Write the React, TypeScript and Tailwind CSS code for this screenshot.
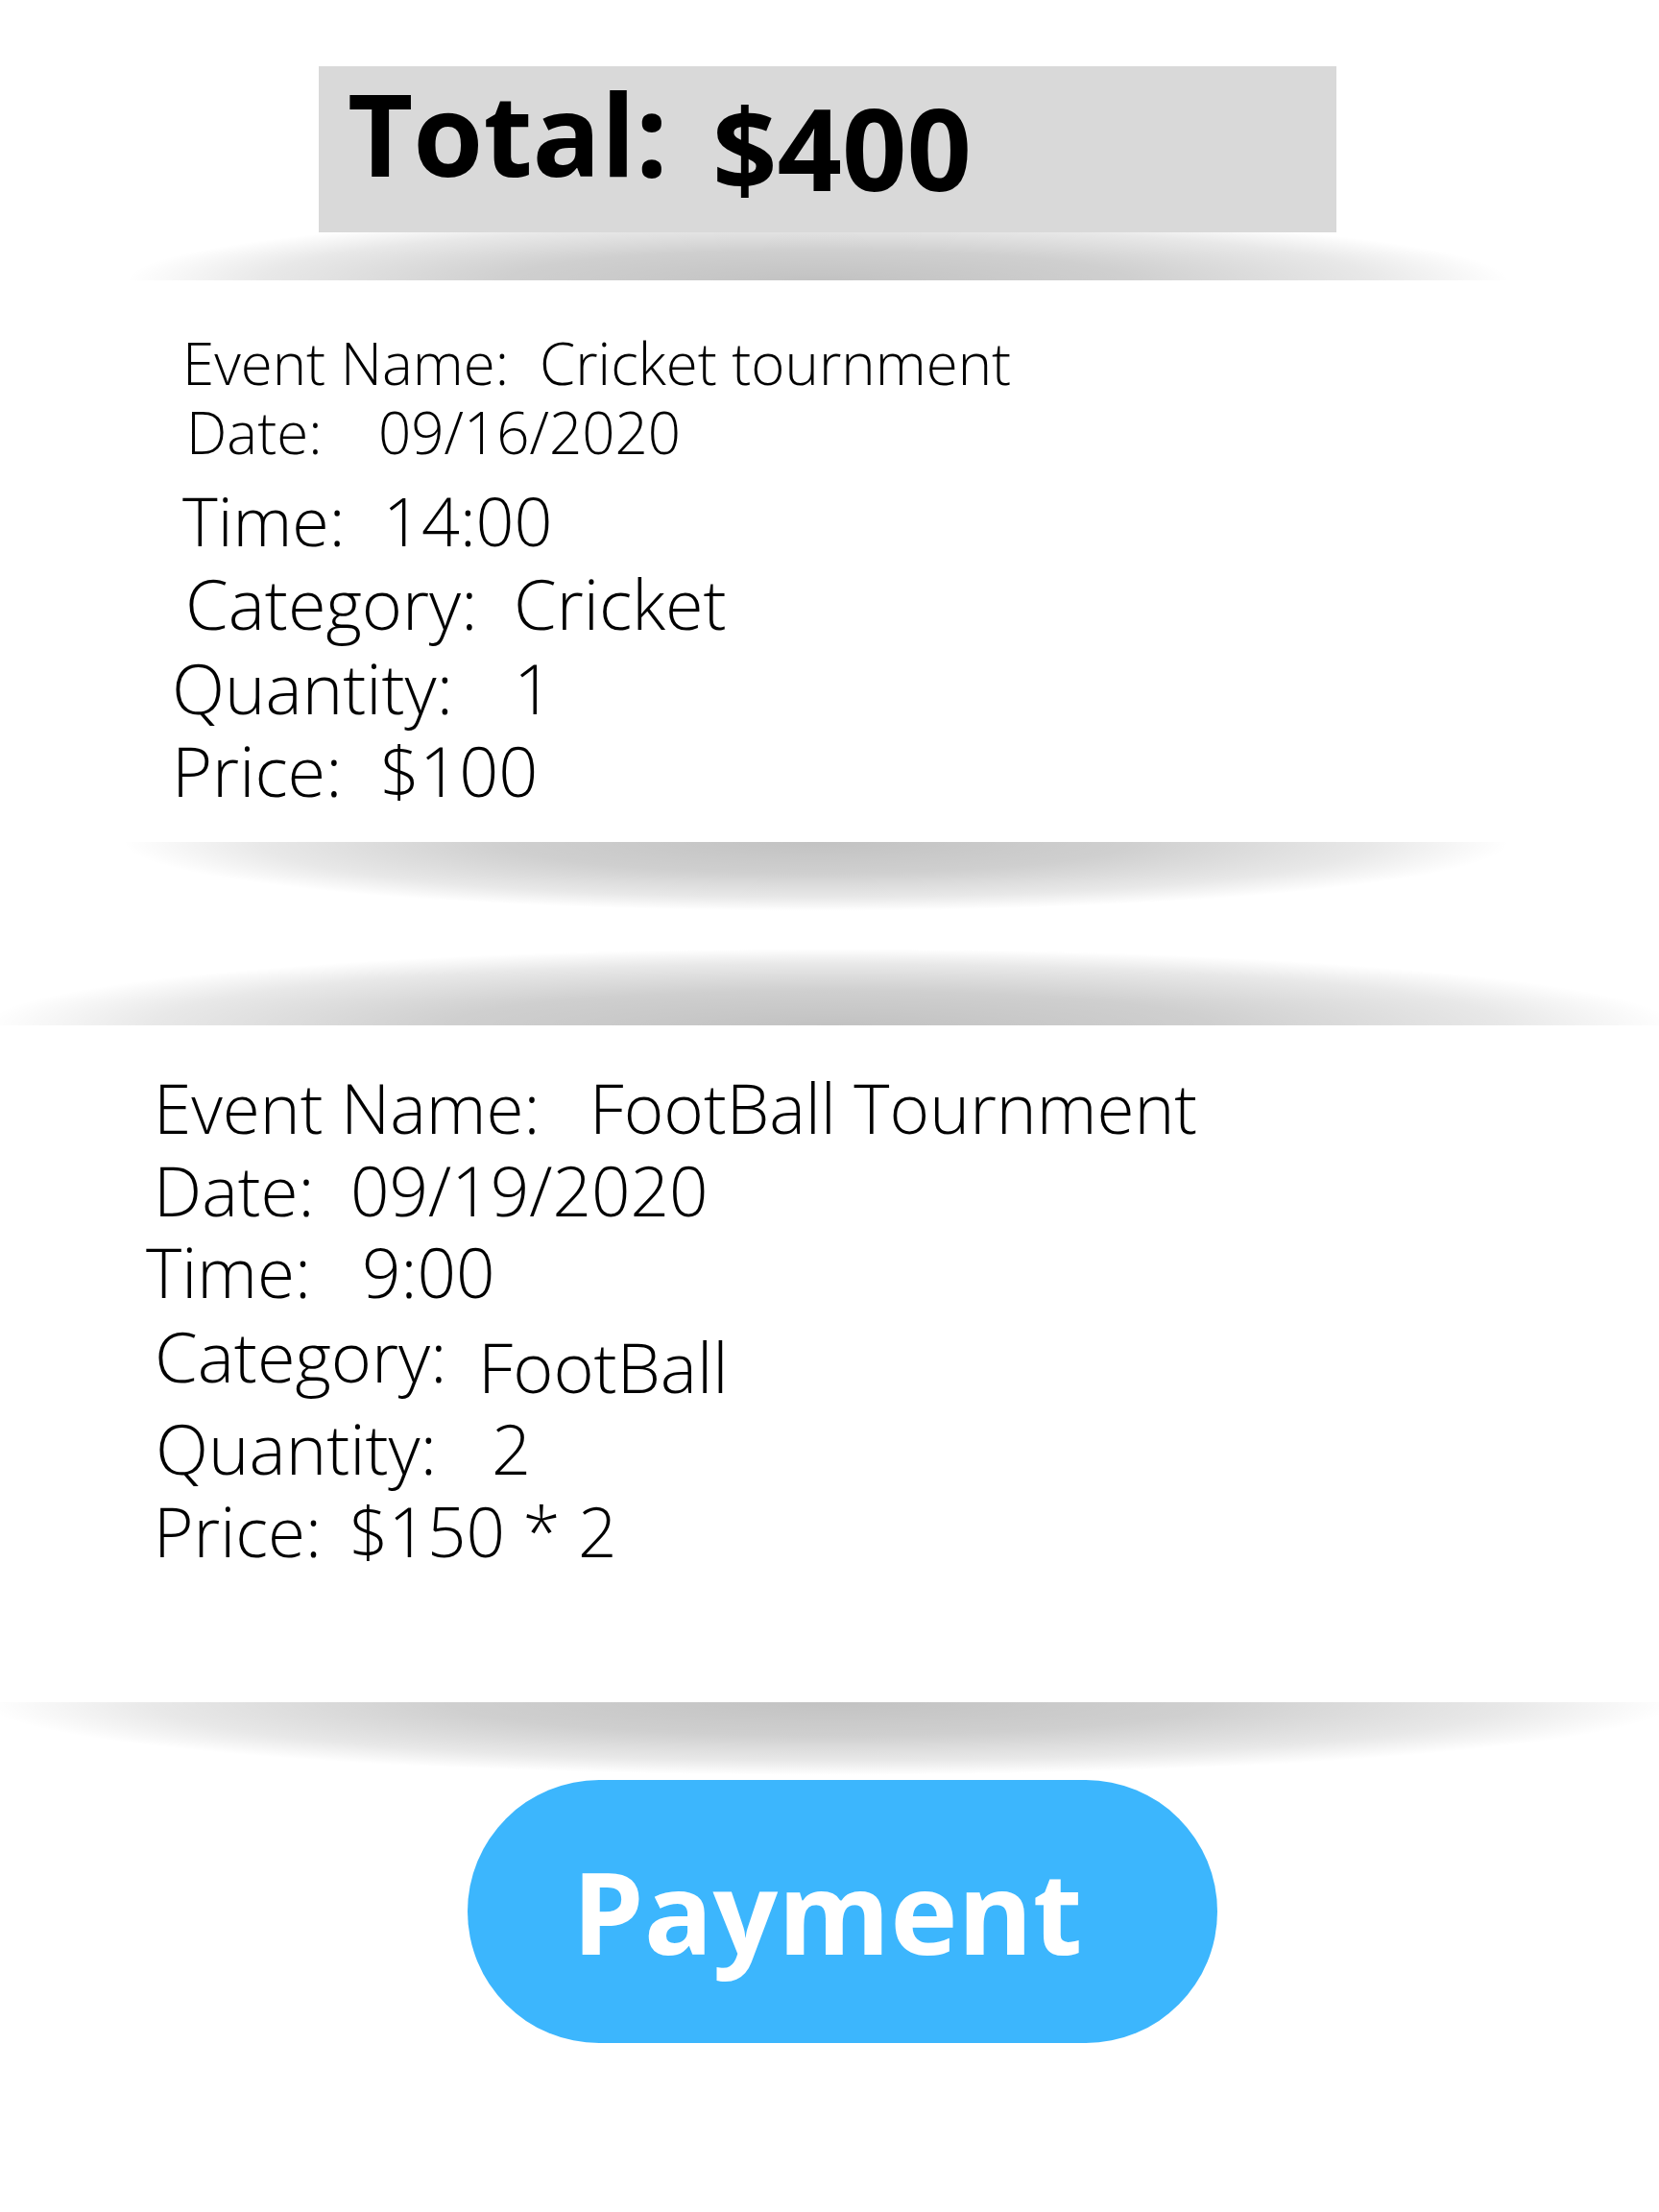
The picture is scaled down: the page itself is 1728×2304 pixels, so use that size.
import React from "react";

export default function App() {
  return (
    <div className="min-h-[2304px] w-[1728px] bg-white pt-[69px] font-['Open_Sans',sans-serif] text-black">
      {/* Total box */}
      <div className="ml-[332px] flex h-[173px] w-[1060px] items-start bg-[#d9d9d9] pl-[30px] text-[118px] font-bold leading-none">
        <span className="mt-[11px] w-[380px] shrink-0">Total:</span>
        <span className="mt-[26px]">$400</span>
      </div>

      {/* shadow under total */}
      <div className="h-[50px] bg-[radial-gradient(ellipse_720px_70px_at_852px_100%,rgba(0,0,0,0.24)_0%,rgba(0,0,0,0.19)_45%,rgba(0,0,0,0.09)_80%,transparent_100%)]" />

      {/* Card 1 */}
      <div className="h-[585px] pt-[56px] font-light">
        <div className="flex pl-[190px] text-[60px] leading-none">
          <span className="w-[372px] shrink-0">Event Name:</span>
          <span>Cricket tournment</span>
        </div>
        <div className="mt-[12px] flex pl-[194px] text-[60px] leading-none">
          <span className="w-[200px] shrink-0">Date:</span>
          <span>09/16/2020</span>
        </div>
        <div className="mt-[27px] flex pl-[190px] text-[70px] leading-none">
          <span className="w-[209px] shrink-0">Time:</span>
          <span>14:00</span>
        </div>
        <div className="mt-[15px] flex pl-[193px] text-[72px] leading-none">
          <span className="w-[342px] shrink-0">Category:</span>
          <span>Cricket</span>
        </div>
        <div className="mt-[16px] flex pl-[179px] text-[72px] leading-none">
          <span className="w-[356px] shrink-0">Quantity:</span>
          <span>1</span>
        </div>
        <div className="mt-[14px] flex pl-[179px] text-[72px] leading-none">
          <span className="w-[217px] shrink-0">Price:</span>
          <span>$100</span>
        </div>
      </div>

      {/* shadow under card 1 */}
      <div className="h-[83px] bg-[radial-gradient(ellipse_722px_72px_at_850px_0%,rgba(0,0,0,0.24)_0%,rgba(0,0,0,0.19)_45%,rgba(0,0,0,0.09)_80%,transparent_100%)]" />
      {/* shadow above card 2 */}
      <div className="h-[108px] bg-[radial-gradient(ellipse_880px_80px_at_864px_100%,rgba(0,0,0,0.24)_0%,rgba(0,0,0,0.19)_45%,rgba(0,0,0,0.09)_80%,transparent_100%)]" />

      {/* Card 2 */}
      <div className="h-[705px] pt-[50px] font-light">
        <div className="flex pl-[160px] text-[71px] leading-none">
          <span className="w-[454px] shrink-0">Event Name:</span>
          <span>FootBall Tournment</span>
        </div>
        <div className="mt-[15px] flex pl-[160px] text-[71px] leading-none">
          <span className="w-[205px] shrink-0">Date:</span>
          <span>09/19/2020</span>
        </div>
        <div className="mt-[14px] flex pl-[152px] text-[71px] leading-none">
          <span className="w-[225px] shrink-0">Time:</span>
          <span>9:00</span>
        </div>
        <div className="mt-[16px] flex pl-[161px] text-[72px] leading-none">
          <span className="w-[337px] shrink-0">Category:</span>
          <span className="translate-y-[11px]">FootBall</span>
        </div>
        <div className="mt-[24px] flex pl-[162px] text-[72px] leading-none">
          <span className="w-[350px] shrink-0">Quantity:</span>
          <span>2</span>
        </div>
        <div className="mt-[15px] flex pl-[160px] text-[71px] leading-none">
          <span className="w-[204px] shrink-0">Price:</span>
          <span>$150 * 2</span>
        </div>
      </div>

      {/* shadow under card 2 */}
      <div className="h-[81px] bg-[radial-gradient(ellipse_880px_76px_at_864px_0%,rgba(0,0,0,0.24)_0%,rgba(0,0,0,0.19)_45%,rgba(0,0,0,0.09)_80%,transparent_100%)]" />

      {/* Payment button */}
      <div className="pl-[487px]">
        <button className="flex h-[274px] w-[781px] items-start rounded-full bg-[#3cb6fd] pl-[109px] pt-[77px] text-[119px] font-bold leading-none text-white">
          Payment
        </button>
      </div>
    </div>
  );
}
